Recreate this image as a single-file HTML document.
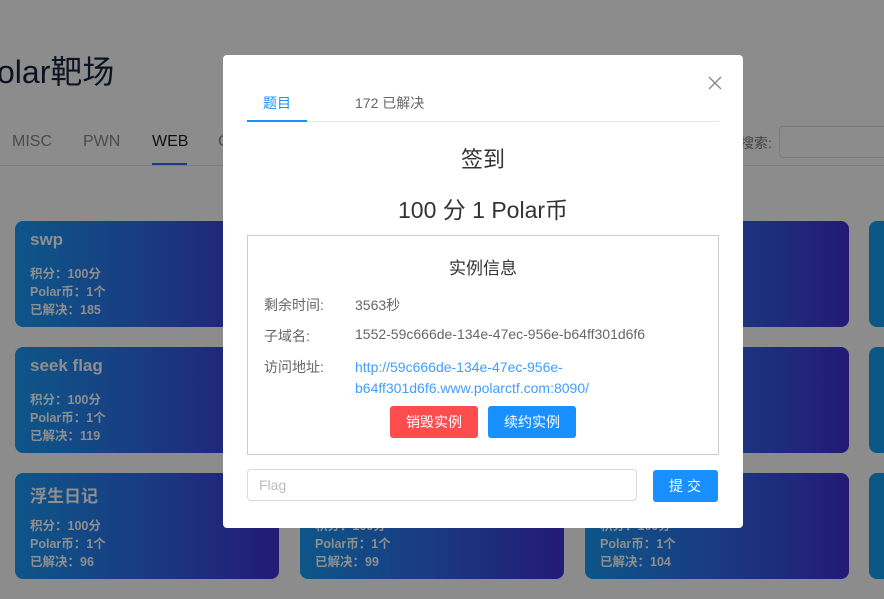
<!DOCTYPE html>
<html><head><meta charset="utf-8">
<style>
*{margin:0;padding:0;box-sizing:border-box}
body{width:884px;height:599px;overflow:hidden;background:#8c8c8c;font-family:"Liberation Sans","Noto Sans CJK SC",sans-serif;position:relative}
.abs{position:absolute}
.title{left:-3px;top:47px;font-size:32px;color:#0c1322;letter-spacing:0px}
.nav{top:133px;font-size:16px;color:#4a4a4a}
.card{position:absolute;width:264px;height:106px;border-radius:8px;background:linear-gradient(90deg,#0d5688 0%,#1a3a82 50%,#231a76 100%);color:#8f8f8f;font-weight:bold}
.card .h{position:absolute;left:15px;top:9px;font-size:17px}
.card .l{position:absolute;left:15px;top:44px;font-size:12.5px;line-height:18px}
.modal{left:223px;top:55px;width:520px;height:473px;background:#fff;border-radius:4px}
.lbl{position:absolute;left:16px;font-size:14px;color:#666}
.val{position:absolute;left:107px;font-size:14px;color:#666}
</style></head><body>
<div class="abs title">olar靶场</div>
<div class="abs nav" style="left:12px">MISC</div>
<div class="abs nav" style="left:83px">PWN</div>
<div class="abs nav" style="left:152px;color:#111">WEB</div>
<div class="abs" style="left:152px;top:163px;width:35px;height:2px;background:#1a3b86"></div>
<div class="abs nav" style="left:218px">C</div>
<div class="abs" style="left:0;top:165px;width:884px;height:1px;background:#7e7e7e"></div>
<div class="abs" style="left:740px;top:133px;font-size:14px;color:#444">搜索:</div>
<div class="abs" style="left:779px;top:126px;width:120px;height:32px;border:1px solid #7a7a7a;border-radius:4px"></div>

<div class="card" style="left:15px;top:221px"><div class="h">swp</div><div class="l">积分：100分<br>Polar币：1个<br>已解决：185</div></div>
<div class="card" style="left:15px;top:347px"><div class="h">seek flag</div><div class="l">积分：100分<br>Polar币：1个<br>已解决：119</div></div>
<div class="card" style="left:15px;top:473px"><div class="h">浮生日记</div><div class="l">积分：100分<br>Polar币：1个<br>已解决：96</div></div>
<div class="card" style="left:300px;top:221px"></div>
<div class="card" style="left:300px;top:347px"></div>
<div class="card" style="left:300px;top:473px"><div class="l">积分：100分<br>Polar币：1个<br>已解决：99</div></div>
<div class="card" style="left:585px;top:221px"></div>
<div class="card" style="left:585px;top:347px"></div>
<div class="card" style="left:585px;top:473px"><div class="l">积分：100分<br>Polar币：1个<br>已解决：104</div></div>
<div class="card" style="left:869px;top:221px;background:#0a5785"></div>
<div class="card" style="left:869px;top:347px;background:#0a5785"></div>
<div class="card" style="left:869px;top:473px;background:#0a5785"></div>

<div class="abs modal">
 <svg class="abs" style="left:485px;top:21px" width="14" height="14" viewBox="0 0 14 14"><path d="M1 1L13 13M13 1L1 13" stroke="#888" stroke-width="1.4"/></svg>
 <div class="abs" style="left:40px;top:38px;font-size:14px;color:#1890ff">题目</div>
 <div class="abs" style="left:132px;top:38px;font-size:14px;color:#666">172 已解决</div>
 <div class="abs" style="left:24px;top:66px;width:472px;height:1px;background:#e6e6e6"></div>
 <div class="abs" style="left:24px;top:65px;width:60px;height:2px;background:#1890ff"></div>
 <div class="abs" style="left:0;top:87px;width:520px;text-align:center;font-size:22px;color:#333">签到</div>
 <div class="abs" style="left:0;top:136px;width:520px;text-align:center;font-size:23px;color:#333">100 分 1 Polar币</div>
 <div class="abs" style="left:24px;top:180px;width:472px;height:220px;border:1px solid #ccc">
  <div class="abs" style="left:0;top:18px;width:470px;text-align:center;font-size:17px;color:#333">实例信息</div>
  <div class="lbl" style="top:59px">剩余时间:</div><div class="val" style="top:59px">3563秒</div>
  <div class="lbl" style="top:90px">子域名:</div><div class="val" style="top:90px">1552-59c666de-134e-47ec-956e-b64ff301d6f6</div>
  <div class="lbl" style="top:121px">访问地址:</div><div class="val" style="top:121px;color:#409eff;line-height:21px">http://59c666de-134e-47ec-956e-<br>b64ff301d6f6.www.polarctf.com:8090/</div>
  <div class="abs" style="left:142px;top:170px;width:88px;height:32px;background:#ff4d4f;border-radius:3px;color:#fff;font-size:14px;text-align:center;line-height:32px">销毁实例</div>
  <div class="abs" style="left:240px;top:170px;width:88px;height:32px;background:#1890ff;border-radius:3px;color:#fff;font-size:14px;text-align:center;line-height:32px">续约实例</div>
 </div>
 <div class="abs" style="left:24px;top:414px;width:390px;height:32px;border:1px solid #d9d9d9;border-radius:4px;font-size:14px;color:#bbb;padding:7px 11px">Flag</div>
 <div class="abs" style="left:430px;top:415px;width:65px;height:32px;background:#1890ff;border-radius:3px;color:#fff;font-size:14px;text-align:center;line-height:32px;letter-spacing:4px;padding-left:3px">提交</div>
</div>
</body></html>
